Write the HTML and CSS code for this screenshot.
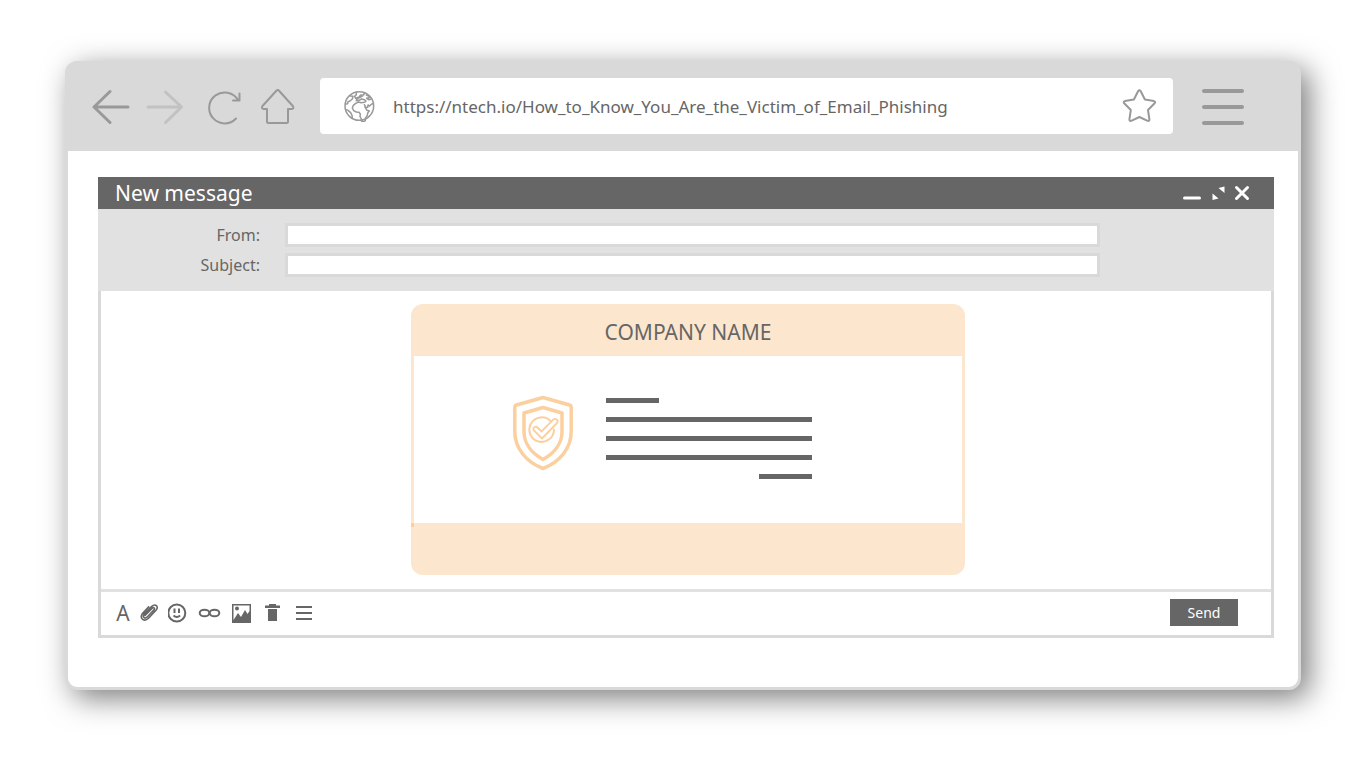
FILE: index.html
```html
<!DOCTYPE html>
<html lang="en">
<head>
  <meta charset="UTF-8">
  <meta name="viewport" content="width=device-width, initial-scale=1.0">
  <title>New message</title>
  <link rel="stylesheet" href="styles.css">
</head>
<body>
  <div class="browser">
    <!-- Browser bar -->
    <header class="browser-bar">
      <nav class="nav">
        <div class="nav-group">
          <button type="button" aria-label="Back">
            <svg width="38" height="36" viewBox="0 0 38 36" stroke-width="3"><path d="M18 2.500 2 18l16 15.500M2 18h34"/></svg>
          </button>
          <button type="button" class="disabled" aria-label="Forward">
            <svg width="38" height="36" viewBox="0 0 38 36" stroke-width="3"><path d="M19.500 3 35.500 18l-16 15.500M35.500 18H2"/></svg>
          </button>
        </div>
        <div class="nav-group">
          <button type="button" aria-label="Reload">
            <svg width="36" height="36" viewBox="0 0 36 36" stroke-width="2"><path d="M28 29.500A15.500 15.500 0 1 1 30 11M31.500 4.500v7H25"/></svg>
          </button>
          <button type="button" aria-label="Home">
            <svg width="36" height="36" viewBox="0 0 36 36" stroke-width="2"><path d="M16.600 1.500 2.500 17q-1.500 2.500 1 3H7v12.500q0 1.500 1.500 1.500h18q1.500 0 1.500-1.500V20h4q2.300-.5.8-3L18.800 1.500q-1.100-1-2.200 0z"/></svg>
          </button>
        </div>
      </nav>
      <div class="address">
        <svg class="globe" width="32" height="32" viewBox="0 0 96 96" stroke-width="4.500">
          <circle cx="46" cy="48" r="43"/>
          <path d="M37 7v7l-5 5 3 6 9-3 6-7 10-1M62 8l-5 9-10 6-9 4-1 5 8-1 8-4 8 2 5 4-4 4-11 1-7-2-9 4-7 6-3 8 4 8 8 4 8 1 4 5-1 7 4 8 1 7 6 2 5-4 1-9 5-7 1-7 5-6-7-2-6-10M61 44l5 9 5-1 1-7 5 3 6-6 5-1M67 15l7 3 2 5-8 2 6 4 6-1M19 18l8 1-2 8-7 6-6 2-1 6-6 1M5 58l7 3 8 7 4 8 1 8"/>
        </svg>
        <input type="text" class="url" aria-label="Address" value="https://ntech.io/How_to_Know_You_Are_the_Victim_of_Email_Phishing">
        <button type="button" aria-label="Bookmark">
          <svg width="36" height="36" viewBox="0 0 36 36" stroke-width="2"><path d="M17.200 3q1.300-1.600 2.400 0l4.300 8.500 9 1.600q2 .6.700 2.200l-6.600 6.700 1.400 9.500q0 1.900-1.800 1.400L18.400 29l-8.200 3.900q-1.800.5-1.800-1.400l1.400-9.500-6.600-6.700q-1.300-1.600.7-2.200l9-1.600z"/></svg>
        </button>
      </div>
      <button type="button" class="menu" aria-label="Menu">
        <span></span>
        <span></span>
        <span></span>
      </button>
    </header>

    <!-- Compose window -->
    <main class="page">
      <form class="compose">
        <div class="title-bar">
          <h1>New message</h1>
          <div class="window-controls">
            <button type="button" aria-label="Minimize">
              <svg width="20" height="16" viewBox="0 0 20 16" stroke-width="3"><path d="M2.500 13h15"/></svg>
            </button>
            <button type="button" aria-label="Expand">
              <svg width="14" height="16" viewBox="0 0 14 16"><path class="solid" d="M13.500 1.500v6.500L7.500 3zM1.500 15V8.500l6 5z"/></svg>
            </button>
            <button type="button" aria-label="Close">
              <svg width="16" height="16" viewBox="0 0 16 16" stroke-width="3"><path d="m2.500 2.500 11 11m0-11-11 11"/></svg>
            </button>
          </div>
        </div>

        <div class="fields">
          <label for="from">From:</label>
          <input type="text" id="from">
          <label for="subject">Subject:</label>
          <input type="text" id="subject">
        </div>

        <div class="message">
          <section class="card">
            <h2>COMPANY NAME</h2>
            <div class="card-body">
              <svg class="shield" width="62" height="76" viewBox="0 0 62 76">
                <path stroke-width="3.500" d="M31 2.500 4.500 10q-1.700.5-1.700 2.500v24C2.800 53 14 67 31 73.500 48 67 59.200 53 59.200 36.500v-24q0-2-1.700-2.500z"/>
                <path stroke-width="3.500" d="m31 12.500-19 5.500v19c0 11 7.500 21 19 27.500C42.500 58 50 48 50 37V18z"/>
                <path stroke-width="2" d="M38.500 26A12.300 12.300 0 1 0 42 34.500"/>
                <path stroke-width="1.800" d="m29.500 36.500-4-4c-2-2-5.500.5-3.500 3l8 8 15-15.500c2-2.600-1.500-5.500-3.800-3.300z"/>
              </svg>
              <div class="lines">
                <span class="line short"></span>
                <span class="line"></span>
                <span class="line"></span>
                <span class="line"></span>
                <span class="line short end"></span>
              </div>
            </div>
            <div class="card-footer"></div>
          </section>
        </div>

        <div class="toolbar">
          <div class="tools">
            <button type="button" class="font-tool" aria-label="Font">A</button>
            <button type="button" aria-label="Attach file">
              <svg width="18" height="20" viewBox="0 0 18 20" stroke-width="1.600"><path d="m5 12.500 7.300-7.300c1.500-1.300 3 .2 1.700 1.700l-7 7.300c-2.300 2-5-.5-3-2.800l7.800-8c3.500-3.300 7.300.3 4.400 3.600l-7.700 8.200c-4 4-9.500.5-6.300-4.300l6.500-7"/></svg>
            </button>
            <button type="button" aria-label="Emoji">
              <svg width="20" height="20" viewBox="0 0 20 20" stroke-width="2"><circle cx="8.800" cy="10" r="8.500"/><path stroke-linecap="butt" d="M6.500 5.500v4.500M11 5.500v4.500M5.500 12.500q3.300 3 6.600 0"/></svg>
            </button>
            <button type="button" aria-label="Insert link">
              <svg width="24" height="20" viewBox="0 0 24 20" stroke-width="2"><ellipse cx="6.500" cy="10" rx="4.800" ry="3.300"/><ellipse cx="16.500" cy="10" rx="4.800" ry="3.300"/></svg>
            </button>
            <button type="button" aria-label="Insert image">
              <svg width="20" height="20" viewBox="0 0 20 20"><path class="solid" fill-rule="evenodd" d="M0 1h19v19H0zm1.500 1.500V17L6 10l3 4 4-7 2.500 4L17.500 8V2.500z"/><circle class="solid" cx="5" cy="5.500" r="2"/></svg>
            </button>
            <button type="button" aria-label="Delete">
              <svg width="20" height="20" viewBox="0 0 20 20"><path class="solid" d="M7 1h7v1.500h4V5H3V2.500h4zM6 6h9v12H6z"/></svg>
            </button>
            <button type="button" aria-label="More options">
              <svg width="20" height="20" viewBox="0 0 20 20" stroke-width="2"><path class="flat" d="M4 4h16M4 10h16M4 16h16"/></svg>
            </button>
          </div>
          <button type="button" class="send">Send</button>
        </div>
      </form>
    </main>
  </div>
</body>
</html>
```

FILE: styles.css
```css
* {
  box-sizing: border-box;
}
body {
  margin: 0;
  padding: 61px 65px;
  background: #fff;
  color: #666;
  font-family: "Noto Sans", "Open Sans", sans-serif;
  font-size: 16px;
}
button {
  display: flex;
  padding: 0;
  border: none;
  background: none;
  color: inherit;
  font-family: inherit;
  cursor: pointer;
}
input {
  min-width: 0;
  color: inherit;
  font-family: inherit;
}
svg {
  display: block;
  flex: none;
  fill: none;
  stroke: currentColor;
  stroke-linecap: round;
  stroke-linejoin: round;
}
.solid {
  fill: currentColor;
  stroke: none;
}
.flat {
  stroke-linecap: butt;
}

/* Browser */
.browser {
  border: 3px solid #d9d9d9;
  border-radius: 12px;
  background: #fff;
  box-shadow: 8px 8px 30px rgba(0, 0, 0, 0.52);
}
.browser-bar {
  display: flex;
  align-items: center;
  padding: 14px 54px 17px 24px;
  background: #d9d9d9;
  border-radius: 8px 8px 0 0;
  color: #999;
}
.nav {
  display: flex;
  gap: 24px;
  padding-top: 2px;
}
.nav-group {
  display: flex;
  gap: 16px;
}
.disabled {
  color: #c2c2c2;
}
.address {
  flex: 1;
  display: flex;
  align-items: center;
  height: 56px;
  margin: 0 29px 0 24px;
  padding: 0 16px 0 24px;
  background: #fff;
  border-radius: 4px;
}
.url {
  flex: 1;
  margin-left: 17px;
  padding: 0;
  border: none;
  background: none;
  color: #666;
  font-size: 17px;
}
.menu {
  flex-direction: column;
  gap: 12px;
  padding-top: 2px;
}
.menu span {
  width: 42px;
  height: 4px;
  border-radius: 2px;
  background: #999;
}
.page {
  padding: 26px 24px 49px 30px;
}

/* Compose window */
.compose {
  border: 3px solid #d9d9d9;
  border-top: none;
}
.title-bar {
  display: flex;
  align-items: center;
  justify-content: space-between;
  height: 32px;
  margin: 0 -3px;
  padding: 0 24px 0 17px;
  background: #666;
  color: #fff;
}
h1 {
  margin: 0;
  font-size: 21px;
  font-weight: 400;
}
.window-controls {
  display: flex;
  gap: 9px;
}
.fields {
  display: grid;
  grid-template-columns: 162px 1fr;
  gap: 6px 25px;
  margin: 0 -3px;
  padding: 14px 174px 14px 0;
  background: #e1e1e1;
}
.fields label {
  text-align: right;
  line-height: 24px;
}
.fields input {
  height: 24px;
  padding: 0 6px;
  border: 3px solid #d9d9d9;
  background: #fff;
}
.message {
  display: flex;
  justify-content: center;
  padding: 13px 0 14px 4px;
  border-bottom: 3px solid #e1e1e1;
}

/* Card */
.card {
  width: 554px;
  border-radius: 12px;
  background: #fde6ce;
}
h2 {
  margin: 0;
  padding-top: 4px;
  font-size: 21px;
  font-weight: 400;
  line-height: 48px;
  text-align: center;
}
.card-body {
  display: flex;
  align-items: flex-start;
  height: 167px;
  margin: 0 3px;
  padding: 39px 98px;
  background: #fff;
}
.shield {
  color: #fccf9f;
}
.lines {
  display: flex;
  flex-direction: column;
  gap: 14px;
  width: 206px;
  margin: 3px 0 0 32px;
}
.line {
  height: 5px;
  background: #666;
}
.line.short {
  width: 53px;
}
.line.end {
  align-self: flex-end;
}
.card-footer {
  height: 52px;
}
.card-footer::before {
  content: "";
  display: block;
  width: 3px;
  height: 4px;
  background: #fccf9f;
}

/* Toolbar */
.toolbar {
  display: flex;
  align-items: center;
  justify-content: space-between;
  height: 43px;
  padding: 0 33px 2px 15px;
}
.tools {
  display: flex;
  align-items: center;
  gap: 10px;
}
.font-tool {
  justify-content: center;
  width: 14px;
  font-size: 21px;
  line-height: 18px;
}
.send {
  align-items: center;
  justify-content: center;
  width: 68px;
  height: 27px;
  background: #666;
  color: #fff;
  font-size: 14px;
}
```
